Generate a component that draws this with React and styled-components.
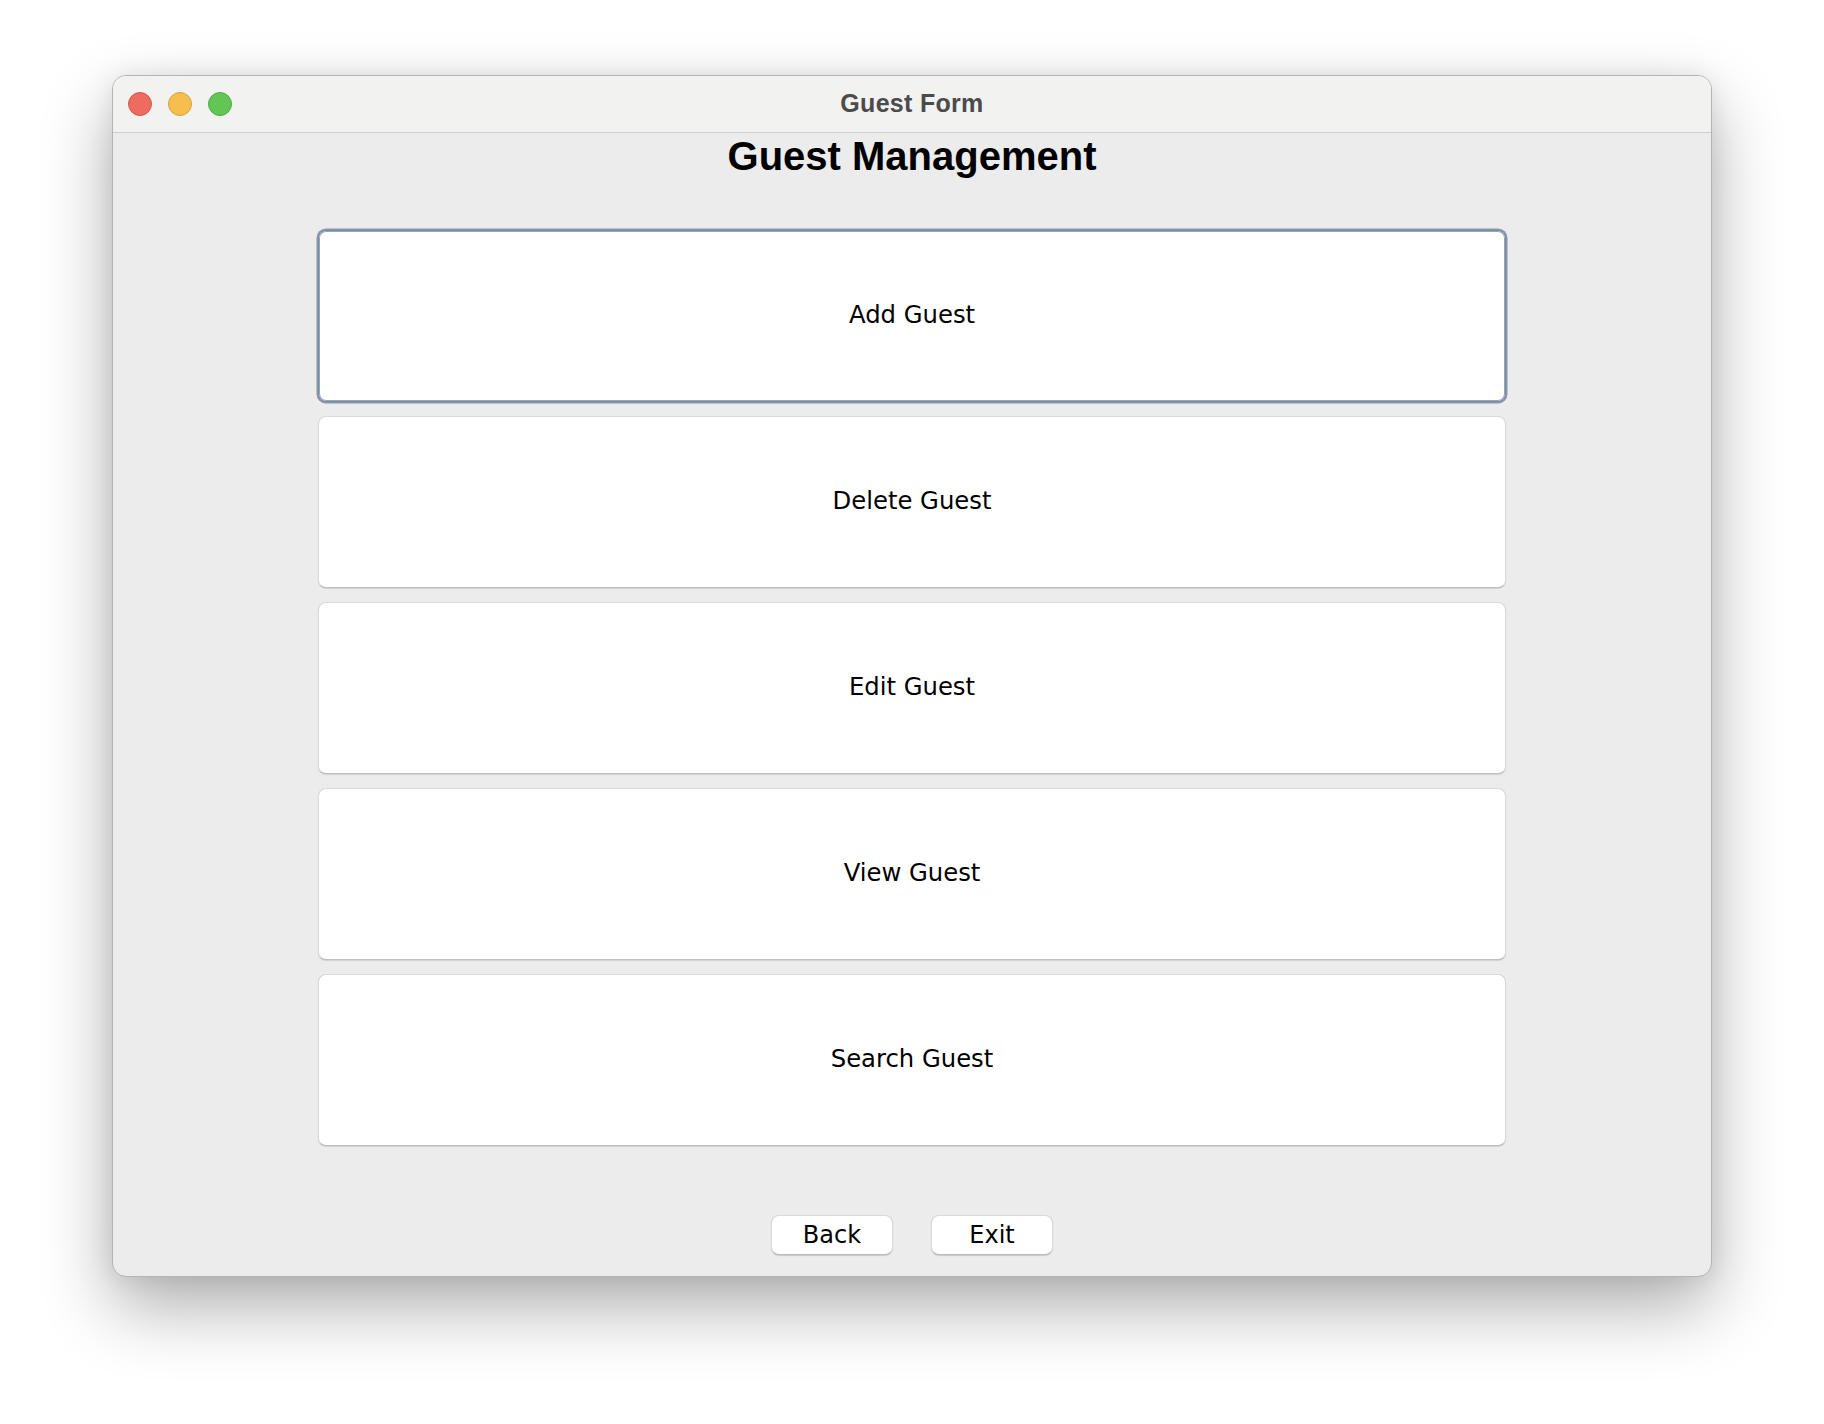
import React from "react";
import styled, { createGlobalStyle } from "styled-components";

const GlobalStyle = createGlobalStyle`
  html, body {
    margin: 0;
    padding: 0;
    background: #ffffff;
  }
  * { box-sizing: border-box; }
`;

const Page = styled.div`
  min-height: 1424px;
  padding-top: 75px;
  display: flex;
  justify-content: center;
  align-items: flex-start;
  font-family: "DejaVu Sans", "Liberation Sans", sans-serif;
`;

const Window = styled.div`
  width: 1600px;
  height: 1202px;
  border: 1px solid #b4b4b4;
  border-radius: 14px;
  background: #ececec;
  overflow: hidden;
  display: flex;
  flex-direction: column;
  box-shadow: 0 30px 70px rgba(0, 0, 0, 0.32), 0 0 24px rgba(0, 0, 0, 0.08);
`;

const TitleBar = styled.div`
  height: 57px;
  flex: none;
  background: #f2f2f1;
  border-bottom: 1px solid #cfcfcf;
  display: grid;
  grid-template-columns: 1fr auto 1fr;
  align-items: center;
  padding: 0 15px;
`;

const Lights = styled.div`
  display: flex;
  gap: 16px;
`;

const Light = styled.span`
  width: 24px;
  height: 24px;
  border-radius: 50%;
  background: ${(p) => p.$fill};
  border: 1px solid ${(p) => p.$edge};
`;

const WindowTitle = styled.div`
  font-family: "Liberation Sans", Arial, sans-serif;
  font-weight: 700;
  font-size: 25px;
  color: #4b4b4b;
  letter-spacing: 0.3px;
  padding-bottom: 2px;
`;

const Content = styled.div`
  flex: 1;
  display: flex;
  flex-direction: column;
  align-items: center;
  padding: 0 205px 21px;
`;

const Heading = styled.h1`
  margin: 0 0 51px;
  font-family: "Liberation Sans", Arial, sans-serif;
  font-weight: 700;
  font-size: 40px;
  line-height: 46px;
  color: #000;
`;

const ActionList = styled.div`
  width: 100%;
  display: flex;
  flex-direction: column;
  gap: 14px;
`;

const ActionButton = styled.button`
  height: 172px;
  width: 100%;
  background: #ffffff;
  border: 1px solid ${(p) => (p.$focused ? "#7a8aa3" : "#d9d9d9")};
  border-bottom-color: ${(p) => (p.$focused ? "#7a8aa3" : "#bdbdbd")};
  border-radius: 8px;
  box-shadow: ${(p) =>
    p.$focused
      ? "0 0 0 1.5px #8797ad, inset 0 0 0 1px #98a6b9"
      : "0 1px 1px rgba(0,0,0,0.12)"};
  font-family: "DejaVu Sans", sans-serif;
  font-size: 24.3px;
  color: #000;
  display: flex;
  align-items: center;
  justify-content: center;
  padding: 0 0 3px;
  cursor: pointer;
`;

const Footer = styled.div`
  margin-top: auto;
  display: flex;
  justify-content: center;
  gap: 38px;
`;

const SmallButton = styled.button`
  width: 122px;
  height: 40px;
  background: #ffffff;
  border: 1px solid #d8d8d8;
  border-bottom-color: #bcbcbc;
  border-radius: 8px;
  box-shadow: 0 1px 1px rgba(0, 0, 0, 0.15);
  font-family: "DejaVu Sans", sans-serif;
  font-size: 24px;
  color: #000;
  padding: 0;
  cursor: pointer;
`;

const actions = ["Add Guest", "Delete Guest", "Edit Guest", "View Guest", "Search Guest"];

export default function App() {
  return (
    <>
      <GlobalStyle />
      <Page>
        <Window>
          <TitleBar>
            <Lights>
              <Light $fill="#ee6b5f" $edge="#d4574b" />
              <Light $fill="#f6be4f" $edge="#d9a23c" />
              <Light $fill="#62c655" $edge="#4faa41" />
            </Lights>
            <WindowTitle>Guest Form</WindowTitle>
            <div />
          </TitleBar>
          <Content>
            <Heading>Guest Management</Heading>
            <ActionList>
              {actions.map((a, i) => (
                <ActionButton key={a} $focused={i === 0}>
                  {a}
                </ActionButton>
              ))}
            </ActionList>
            <Footer>
              <SmallButton>Back</SmallButton>
              <SmallButton>Exit</SmallButton>
            </Footer>
          </Content>
        </Window>
      </Page>
    </>
  );
}
